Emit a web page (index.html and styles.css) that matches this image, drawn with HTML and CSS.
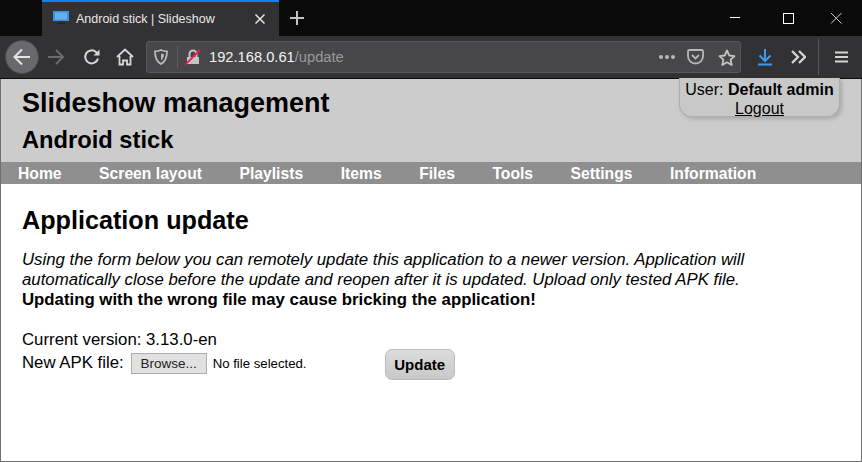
FILE: index.html
```html
<!DOCTYPE html>
<html lang="en">
<head>
<meta charset="utf-8">
<title>Android stick | Slideshow</title>
<link rel="stylesheet" href="styles.css">
</head>
<body>
<div class="window">
  <div class="tabstrip">
    <div class="tab">
      <svg class="favicon" width="16" height="14" viewBox="0 0 16 14"><rect x="0" y="0" width="16" height="10" fill="#3f8fdc"/><rect x="2" y="1.5" width="12" height="7" fill="#62aeee"/><rect x="6" y="10" width="4" height="2" fill="#27303a"/><rect x="4" y="12" width="8" height="1" fill="#1d2227"/></svg>
      <span class="tab-title">Android stick | Slideshow</span>
      <svg class="tab-close" width="12" height="12" viewBox="0 0 12 12"><path d="M1.5 1.5l9 9M10.5 1.5l-9 9" stroke="#e6e6e6" stroke-width="1.5"/></svg>
    </div>
    <svg class="newtab" width="16" height="16" viewBox="0 0 16 16"><path d="M8 1v14M1 8h14" stroke="#c4c4c4" stroke-width="2"/></svg>
    <div class="winctl">
      <svg class="winbtn" width="46" height="36" viewBox="0 0 46 36"><path d="M18 17.5h10" stroke="#fff"/></svg>
      <svg class="winbtn" width="46" height="36" viewBox="0 0 46 36"><rect x="18.5" y="13.5" width="10" height="10" fill="none" stroke="#fff"/></svg>
      <svg class="winbtn" width="46" height="36" viewBox="0 0 46 36"><path d="M18 13l10.500 10.500M28.500 13L18 23.500" stroke="#cfcfcf"/></svg>
    </div>
  </div>
  <div class="toolbar">
    <div class="backbtn"><svg width="20" height="20" viewBox="0 0 20 20"><path d="M18 10H3M10 2.500L2.500 10l7.500 7.500" fill="none" stroke="#e4e4e4" stroke-width="2"/></svg></div>
    <svg class="tool tool-fwd" width="18" height="18" viewBox="0 0 18 18"><path d="M1 9h15M9 2l7 7-7 7" fill="none" stroke="#6c6c6e" stroke-width="2"/></svg>
    <svg class="tool tool-reload" width="18" height="18" viewBox="0 0 18 18"><path d="M15 10.500A6.500 6.500 0 1 1 13 4l3 2.500" fill="none" stroke="#d8d8d8" stroke-width="2"/><path d="M16.500 1.500v6h-6z" fill="#d8d8d8"/></svg>
    <svg class="tool tool-home" width="18" height="18" viewBox="0 0 18 18"><path d="M1 9l8-7.500L17 9M3.500 8v8.500h3.500v-4h4v4h3.500V8" fill="none" stroke="#d8d8d8" stroke-width="1.800"/></svg>
    <div class="urlbar">
      <svg class="shield" width="14" height="16" viewBox="0 0 14 16"><path d="M7 1c2 1 4 1.400 6 1.400 0 6-1.500 10-6 12.600C2.500 12.400 1 8.400 1 2.400 3 2.400 5 2 7 1z" fill="none" stroke="#b8b8ba" stroke-width="1.800"/><path d="M7 4.500c1 .4 2 .6 3 .6 0 2.800-1 5-3 6.500z" fill="#b8b8ba"/></svg>
      <span class="urlsep"></span>
      <svg class="lock" width="16" height="16" viewBox="0 0 16 16"><path d="M2 8h12v7H2z" fill="#c4c4c4"/><path d="M4.500 8V5a3.500 3.500 0 0 1 7 0v3" fill="none" stroke="#c4c4c4" stroke-width="2"/><path d="M0.500 15.500L15 1" stroke="#ee1f4f" stroke-width="1.800"/></svg>
      <span class="url"><span class="url-host">192.168.0.61</span><span class="url-path">/update</span></span>
      <span class="url-dots"><i></i><i></i><i></i></span>
      <svg class="pocket" width="17" height="16" viewBox="0 0 17 16"><path d="M1 2.500Q1 1 2.500 1h12Q16 1 16 2.500V7a7.500 7.500 0 0 1-15 0z" fill="none" stroke="#b8b8ba" stroke-width="1.800"/><path d="M5 6l3.500 3.500L12 6" fill="none" stroke="#b8b8ba" stroke-width="1.800"/></svg>
      <svg class="star" width="18" height="17" viewBox="0 0 18 17"><path d="M9 1.500l2.300 5 5.200.6-3.900 3.600 1.100 5.300L9 13.300 4.300 16l1.100-5.300L1.500 7.100l5.200-.6z" fill="none" stroke="#c4c4c4" stroke-width="1.800" stroke-linejoin="round"/></svg>
    </div>
    <svg class="download" width="14" height="18" viewBox="0 0 14 18"><path d="M7 1v12M1.500 7.500L7 13l5.500-5.500" fill="none" stroke="#3a9bf5" stroke-width="2"/><path d="M0 16.500h14" stroke="#3a9bf5" stroke-width="2"/></svg>
    <svg class="chevrons" width="15" height="14" viewBox="0 0 15 14"><path d="M1 1l6 6-6 6M8 1l6 6-6 6" fill="none" stroke="#d4d4d4" stroke-width="2.300"/></svg>
    <span class="toolsep"></span>
    <svg class="menu" width="13" height="12" viewBox="0 0 13 12"><path d="M0 1.500h13M0 6h13M0 10.500h13" stroke="#d4d4d4" stroke-width="1.800"/></svg>
  </div>
  <div class="page">
    <header class="head">
      <h1 class="site-title">Slideshow management</h1>
      <h2 class="site-sub">Android stick</h2>
      <div class="userbox">User: <b>Default admin</b><br><a href="#">Logout</a></div>
    </header>
    <nav class="nav">
      <a href="#">Home</a>
      <a href="#">Screen layout</a>
      <a href="#">Playlists</a>
      <a href="#">Items</a>
      <a href="#">Files</a>
      <a href="#">Tools</a>
      <a href="#">Settings</a>
      <a href="#">Information</a>
    </nav>
    <main class="content">
      <h2 class="page-title">Application update</h2>
      <p class="intro"><em>Using the form below you can remotely update this application to a newer version. Application will automatically close before the update and reopen after it is updated. Upload only tested APK file.</em><br><b>Updating with the wrong file may cause bricking the application!</b></p>
      <div class="version">Current version: 3.13.0-en</div>
      <form class="upload">
        <span class="upload-label">New APK file:</span>
        <span class="browse">Browse...</span>
        <span class="nofile">No file selected.</span>
        <button class="update" type="button">Update</button>
      </form>
    </main>
  </div>
</div>
</body>
</html>
```
FILE: styles.css
```css
* { box-sizing: border-box; }
html, body { margin: 0; padding: 0; }
body { width: 862px; height: 462px; overflow: hidden; font-family: "Liberation Sans", Arial, sans-serif; font-size: 16px; color: #000; background: #fff; }
.window { width: 862px; height: 462px; display: flex; flex-direction: column; border: 1px solid #6e6e6e; border-top: 0; }

.tabstrip { height: 36px; flex: none; background: #0a0a0b; display: flex; align-items: stretch; margin: 0 -1px; }
.tab { width: 237px; margin-left: 42px; background: #323234; border-top: 2px solid #0a84ff; display: flex; align-items: center; padding-left: 11px; color: #e8e8e8; font-size: 12.500px; }
.favicon { flex: none; margin-top: -2px; }
.tab-title { margin-left: 7px; flex: 1; }
.tab-close { flex: none; margin-right: 13px; }
.newtab { align-self: center; margin-left: 10px; }
.winctl { margin-left: auto; display: flex; margin-right: 3px; }
.winbtn { display: block; margin-left: -3px; width: 46px; }
.winbtn + .winbtn { margin-left: -1px; }
.winctl .winbtn:first-child { margin-right: 8px; }
.winctl .winbtn:last-child { margin-left: 2px; }

.toolbar { height: 43px; flex: none; background: #323234; border-bottom: 1px solid #0b0b0c; display: flex; align-items: center; margin: 0 -1px; color: #e8e8e8; }
.backbtn { width: 34px; height: 34px; border-radius: 50%; background: #69696b; margin-left: 5px; display: flex; align-items: center; justify-content: center; border: 1px solid #4a4a4c; flex: none; }
.tool { flex: none; }
.tool-fwd { margin-left: 8px; }
.tool-reload { margin-left: 18px; }
.tool-home { margin-left: 15px; }
.urlbar { width: 595px; height: 32px; margin-left: 12px; background: #474749; border: 1px solid #58585a; border-radius: 3px; display: flex; align-items: center; padding-left: 7px; flex: none; }
.shield { flex: none; }
.urlsep { width: 1px; height: 22px; background: #5e5e60; margin-left: 9px; }
.lock { margin-left: 7px; flex: none; }
.url { margin-left: 8px; font-size: 14.700px; flex: 1; }
.url-host { color: #f2f2f2; }
.url-path { color: #9a9a9c; }
.url-dots { display: flex; gap: 2px; }
.url-dots i { width: 4px; height: 4px; background: #b8b8ba; border-radius: 50%; display: block; }
.pocket { margin-left: 12px; flex: none; }
.star { margin-left: 14px; margin-right: 4px; flex: none; }
.download { margin-left: 17px; flex: none; }
.chevrons { margin-left: 19px; flex: none; }
.toolsep { width: 1px; height: 36px; background: #58585a; margin-left: 12px; }
.menu { margin-left: 16px; flex: none; }

.page { flex: 1; position: relative; display: flex; flex-direction: column; min-height: 0; }
.head { background: #ccc; height: 83px; flex: none; padding: 8px 0 0 21px; position: relative; }
.site-title { font-size: 27px; line-height: 32px; margin: 0; font-weight: bold; }
.site-sub { font-size: 23.700px; line-height: 28px; margin: 7px 0 0; font-weight: bold; }
.userbox { position: absolute; left: 678px; top: -1px; width: 161px; height: 39px; background: #c8c8c8; border: 1px solid #adadad; border-top: 0; border-radius: 0 0 13px 13px; box-shadow: 2px 2px 4px rgba(0,0,0,.18); text-align: center; font-size: 16px; line-height: 18.500px; padding-top: 3px; }
.userbox a { color: #000; }
.nav { background: #8f8f8f; height: 22px; flex: none; display: flex; padding: 1px 0 0 17px; align-items: center; gap: 37.500px; }
.nav a { color: #fff; font-weight: bold; font-size: 15.700px; text-decoration: none; }
.content { padding: 22px 21px 0; flex: 1; }
.page-title { font-size: 25.200px; line-height: 28px; margin: 0; font-weight: bold; }
.intro { margin: 16px 0 0; font-size: 16.800px; line-height: 20px; }
.version { margin-top: 20px; font-size: 16.800px; line-height: 20px; }
.upload { display: flex; align-items: center; height: 24px; font-size: 16.800px; margin-top: 1px; }
.browse { margin-left: 7px; width: 76px; height: 21px; background: #e1e1e1; border: 1px solid #adadad; font-size: 13.500px; display: flex; align-items: center; justify-content: center; color: #222; }
.nofile { margin-left: 6px; font-size: 13.200px; width: 172px; }
.update { width: 70px; height: 31px; background: linear-gradient(#dcdcdc, #c8c8c8); border: 1px solid #bcbcbc; border-radius: 7px; font: bold 15px "Liberation Sans", Arial, sans-serif; color: #000; padding: 0; margin-top: 2px; }
```
